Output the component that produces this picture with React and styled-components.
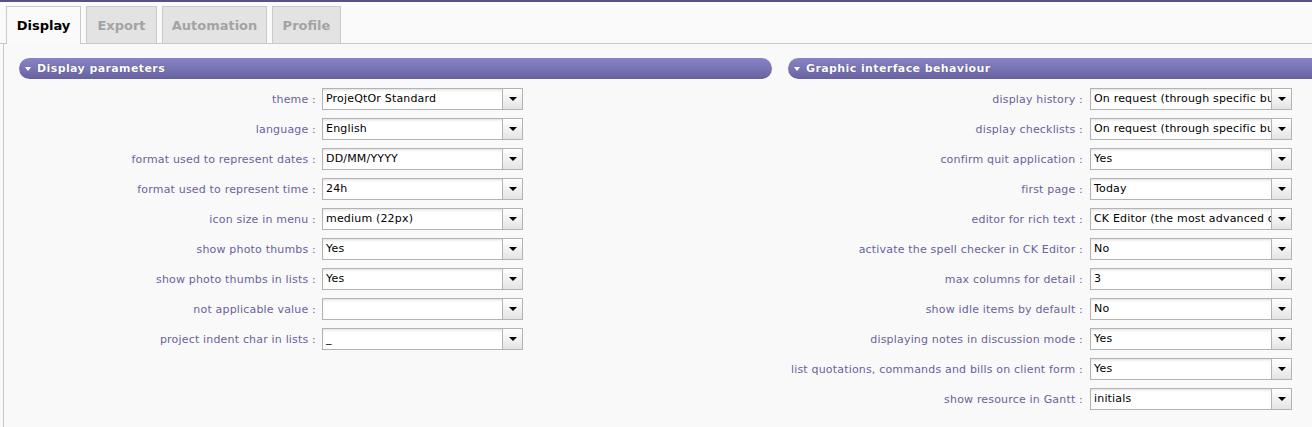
import React from 'react';
import styled, { createGlobalStyle } from 'styled-components';

const GlobalStyle = createGlobalStyle`
  html, body {
    margin: 0;
    padding: 0;
    background: #fafafa;
    overflow: hidden;
  }
  body {
    font-family: Verdana, "DejaVu Sans", sans-serif;
    font-size: 11px;
    letter-spacing: 0.18px;
  }
`

const TopLine = styled.div`
  height: 2px;
  background-color: #55518a;
`
const TabBar = styled.div`
  display: flex;
  gap: 5px;
  padding: 4px 0 0 6px;
  border-bottom: 1px solid #c9c9c9;
`
const Tab = styled.div`
  width: ${p => p.width}px;
  box-sizing: border-box;
  display: flex;
  align-items: center;
  justify-content: center;
  font-size: 13px;
  font-weight: bold;
  letter-spacing: 0;
  border: 1px solid #c9c9c9;
  border-bottom: none;
  color: ${p => (p.active ? '#000' : '#a3a3a3')};
  background-color: ${p => (p.active ? '#fafafa' : '#e3e3e3')};
  margin-bottom: ${p => (p.active ? '-1px' : '0')};
  height: ${p => (p.active ? '38px' : '37px')};
`
const Panel = styled.div`
  margin-left: 3px;
  border-left: 1px solid #c9c9c9;
  height: 383px;
  box-sizing: border-box;
  padding: 14px 0 0 15px;
  background: #f9f9f9;
`
const Columns = styled.div`
  display: flex;
  gap: 16px;
`
const Column = styled.div`
  width: 753px;
  flex-shrink: 0;
`
const SectionHeader = styled.div`
  height: 21px;
  border-radius: 11px;
  background: linear-gradient(to bottom, #8883c6 0%, #7772b3 55%, #67619f 100%);
  color: #fff;
  font-weight: bold;
  font-size: 11px;
  letter-spacing: 0.4px;
  display: flex;
  align-items: center;
  padding-left: 6px;
  gap: 6px;
  text-shadow: 0 0 1px #3d3a66;
  margin-bottom: 9px;
`
const Arrow = styled.span`
  width: 0;
  height: 0;
  border-left: 3px solid transparent;
  border-right: 3px solid transparent;
  border-top: 4px solid #fff;
`
const Rows = styled.div`
  display: flex;
  flex-direction: column;
  gap: 8px;
`
const Row = styled.div`
  display: grid;
  grid-template-columns: ${p => p.labelWidth}px ${p => p.selectWidth}px;
  column-gap: ${p => p.gap}px;
  align-items: center;
`
const Label = styled.div`
  text-align: right;
  color: #6a629d;
  white-space: nowrap;
`
const Select = styled.div`
  height: 22px;
  box-sizing: border-box;
  border: 1px solid #b3b3b3;
  background: #fff;
  box-shadow: inset 0 2px 3px -1px #dcdcdc;
  display: flex;
`
const Value = styled.div`
  flex: 1;
  overflow: hidden;
  white-space: nowrap;
  padding-left: 3px;
  line-height: 20px;
  color: #000;
`
const Button = styled.div`
  width: 19px;
  flex-shrink: 0;
  border-left: 1px solid #b3b3b3;
  background: linear-gradient(to bottom, #ffffff, #e4e4e4);
  display: flex;
  align-items: center;
  justify-content: center;
`
const Caret = styled.span`
  width: 0;
  height: 0;
  border-left: 4px solid transparent;
  border-right: 4px solid transparent;
  border-top: 4px solid #000;
`

const leftRows = [
  ['theme', 'ProjeQtOr Standard'],
  ['language', 'English'],
  ['format used to represent dates', 'DD/MM/YYYY'],
  ['format used to represent time', '24h'],
  ['icon size in menu', 'medium (22px)'],
  ['show photo thumbs', 'Yes'],
  ['show photo thumbs in lists', 'Yes'],
  ['not applicable value', ''],
  ['project indent char in lists', '_'],
];

const rightRows = [
  ['display history', 'On request (through specific button)'],
  ['display checklists', 'On request (through specific button)'],
  ['confirm quit application', 'Yes'],
  ['first page', 'Today'],
  ['editor for rich text', 'CK Editor (the most advanced one)'],
  ['activate the spell checker in CK Editor', 'No'],
  ['max columns for detail', '3'],
  ['show idle items by default', 'No'],
  ['displaying notes in discussion mode', 'Yes'],
  ['list quotations, commands and bills on client form', 'Yes'],
  ['show resource in Gantt', 'initials'],
];

const Section = ({ title, rows, labelWidth, selectWidth, gap }) => (
  <Column>
    <SectionHeader>
      <Arrow />
      {title}
    </SectionHeader>
    <Rows>
      {rows.map(([label, value]) => (
        <Row key={label} labelWidth={labelWidth} selectWidth={selectWidth} gap={gap}>
          <Label>{label}&nbsp;:</Label>
          <Select>
            <Value>{value}</Value>
            <Button><Caret /></Button>
          </Select>
        </Row>
      ))}
    </Rows>
  </Column>
);

const App = () => (
  <>
    <GlobalStyle />
    <TopLine />
    <TabBar>
      <Tab active width={75}>Display</Tab>
      <Tab width={71}>Export</Tab>
      <Tab width={105}>Automation</Tab>
      <Tab width={69}>Profile</Tab>
    </TabBar>
    <Panel>
      <Columns>
        <Section
          title='Display parameters'
          rows={leftRows}
          labelWidth={297}
          selectWidth={201}
          gap={6}
        />
        <Section
          title='Graphic interface behaviour'
          rows={rightRows}
          labelWidth={295}
          selectWidth={202}
          gap={7}
        />
      </Columns>
    </Panel>
  </>
);

export default App;
